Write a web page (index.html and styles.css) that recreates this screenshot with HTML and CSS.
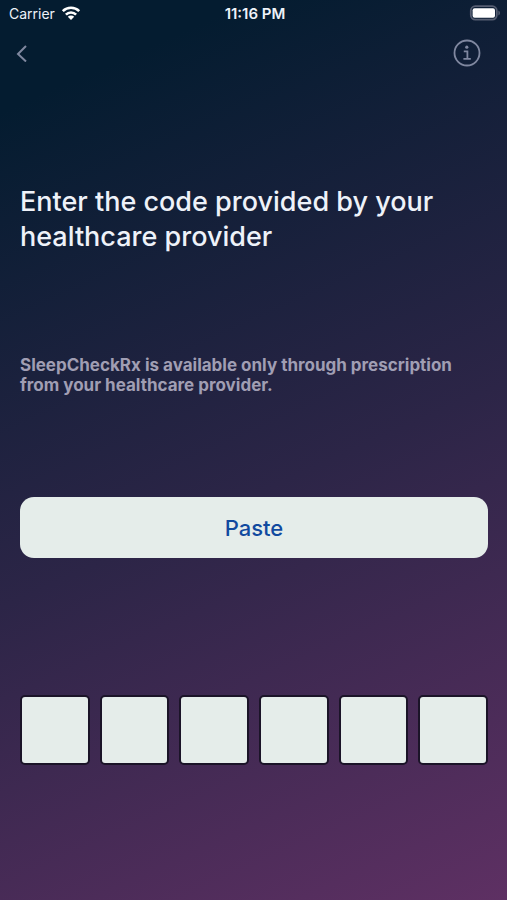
FILE: index.html
```html
<!DOCTYPE html>
<html lang="en">
<head>
  <meta charset="utf-8">
  <meta name="viewport" content="width=device-width, initial-scale=1">
  <title>Enter code</title>
  <link rel="stylesheet" href="styles.css">
</head>
<body>
  <div class="status-bar">
    <div class="carrier">
      <span>Carrier</span>
      <svg width="20" height="16" viewBox="0 0 20 16" aria-hidden="true">
        <g fill="none" stroke="currentColor" stroke-width="2.6">
          <path d="M1.8 6.2a11.6 11.6 0 0 1 16.4 0"/>
          <path d="M4.9 9.6a7.2 7.2 0 0 1 10.2 0"/>
        </g>
        <path fill="currentColor" d="M10 15l-3.2-3.2a4.6 4.6 0 0 1 6.4 0z"/>
      </svg>
    </div>
    <span class="time">11:16 PM</span>
    <svg class="battery" width="32" height="16" viewBox="0 0 32 16" aria-hidden="true">
      <rect x="1.8" y="1.2" width="26" height="13.4" rx="4.5" fill="none" stroke="#565e72" stroke-width="1.8"/>
      <rect x="3.6" y="3.2" width="22.4" height="9.6" rx="2" fill="#fff"/>
      <path d="M29.4 5.6q1.6.6 1.6 2.4t-1.6 2.4z" fill="#565e72"/>
    </svg>
  </div>
  <nav class="nav">
    <button class="icon-button" type="button" aria-label="Back">
      <svg width="12" height="18" viewBox="0 0 12 18" aria-hidden="true">
        <path d="M10 2L2 10l8 7.5" fill="none" stroke="currentColor" stroke-width="2"/>
      </svg>
    </button>
    <button class="icon-button" type="button" aria-label="Information">
      <svg width="28" height="28" viewBox="0 0 28 28" aria-hidden="true">
        <circle cx="14" cy="14" r="12.5" fill="none" stroke="currentColor" stroke-width="1.8"/>
        <circle cx="13.8" cy="8.2" r="1.6" fill="currentColor"/>
        <path d="M10.8 12.4h3.6v7.4M10.4 19.8h7.4" fill="none" stroke="currentColor" stroke-width="1.8"/>
      </svg>
    </button>
  </nav>
  <main class="content">
    <h1 class="title">Enter the code provided by your healthcare provider</h1>
    <p class="note">SleepCheckRx is available only through prescription from your healthcare provider.</p>
    <button class="paste" type="button">Paste</button>
    <form class="code">
      <input class="digit" type="text" inputmode="numeric" maxlength="1" aria-label="Digit 1">
      <input class="digit" type="text" inputmode="numeric" maxlength="1" aria-label="Digit 2">
      <input class="digit" type="text" inputmode="numeric" maxlength="1" aria-label="Digit 3">
      <input class="digit" type="text" inputmode="numeric" maxlength="1" aria-label="Digit 4">
      <input class="digit" type="text" inputmode="numeric" maxlength="1" aria-label="Digit 5">
      <input class="digit" type="text" inputmode="numeric" maxlength="1" aria-label="Digit 6">
    </form>
  </main>
</body>
</html>
```
FILE: styles.css
```css
* {
  box-sizing: border-box;
}

body {
  margin: 0;
  min-height: 100vh;
  background: linear-gradient(156deg, #041c30 10%, #2c2547 54%, #5e3063 100%);
  color: #eef2f9;
  font-family: Inter, "Liberation Sans", sans-serif;
}

button,
input {
  font: inherit;
}

.status-bar {
  display: grid;
  grid-template-columns: 1fr auto 1fr;
  align-items: center;
  height: 26px;
  padding: 0 6px 0 9px;
  font-size: 14px;
}

.carrier {
  display: flex;
  align-items: center;
  gap: 6px;
}

.carrier svg {
  color: #fff;
}

.time {
  font-size: 15px;
  font-weight: 600;
}

.battery {
  justify-self: end;
}

.nav {
  display: flex;
  align-items: center;
  justify-content: space-between;
  height: 54px;
  padding: 0 26px 0 16px;
}

.icon-button {
  display: flex;
  padding: 0;
  border: 0;
  background: none;
  color: #8088a0;
}

.content {
  padding: 104px 19px 0 20px;
}

.title {
  margin: 0;
  font-size: 27px;
  font-weight: 500;
  line-height: 35px;
}

.note {
  margin: 101px 0 102px;
  color: #a09eb3;
  font-size: 17px;
  font-weight: 700;
  line-height: 20px;
}

.paste {
  display: block;
  width: 100%;
  height: 61px;
  border: 0;
  border-radius: 14px;
  background: #e5edea;
  color: #114a9f;
  font-size: 22px;
  font-weight: 500;
}

.code {
  display: grid;
  grid-template-columns: repeat(6, 1fr);
  gap: 10px;
  margin-top: 137px;
}

.digit {
  width: 100%;
  aspect-ratio: 1;
  padding: 0;
  border: 2px solid #1b1428;
  border-radius: 5px;
  background: #e5edea;
  color: #114a9f;
  font-size: 28px;
  text-align: center;
}
```
